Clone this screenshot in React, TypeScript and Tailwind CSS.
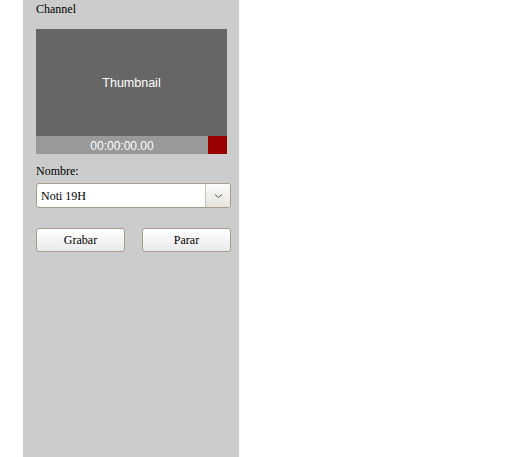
export default function App() {
  return (
    <div className="w-[516px] h-[457px] bg-white flex">
      <div
        className="ml-[23px] w-[216px] h-[457px] bg-[#cccccc] pl-[13px] flex flex-col"
        style={{ fontFamily: '"Liberation Serif", serif' }}
      >
        <div className="text-[12px] leading-[15px] text-black pt-[2px]">Channel</div>
        <div className="mt-[12px] w-[191px] flex flex-col">
          <div
            className="h-[107px] bg-[#666666] flex items-center justify-center text-white text-[12.5px] pt-[1px]"
            style={{ fontFamily: '"Liberation Sans", sans-serif' }}
          >
            Thumbnail
          </div>
          <div className="h-[18px] bg-[#999999] flex">
            <div
              className="flex-1 flex items-center justify-center text-white text-[12px] pt-[1px]"
              style={{ fontFamily: '"Liberation Sans", sans-serif' }}
            >
              00:00:00.00
            </div>
            <div className="w-[19px] bg-[#990000]" />
          </div>
        </div>
        <div className="mt-[10px] text-[12px] leading-[15px] text-black">Nombre:</div>
        <div className="mt-[4px] w-[195px] h-[25px] flex border border-[#a69d8c] rounded-[3px] bg-white overflow-hidden">
          <div className="flex-1 flex items-center pl-[4px] text-[12px] text-black">Noti 19H</div>
          <div className="w-[25px] border-l border-[#c8c2b6] bg-gradient-to-b from-[#fbfbfa] to-[#e6e4df] flex items-center justify-center">
            <svg width="9" height="6" viewBox="0 0 9 6">
              <path d="M1 1.5 L4.5 4.5 L8 1.5" fill="none" stroke="#555" strokeWidth="1" />
            </svg>
          </div>
        </div>
        <div className="mt-[20px] flex gap-[17px]">
          <button className="w-[89px] h-[24px] border border-[#a69d8c] rounded-[3px] bg-gradient-to-b from-white to-[#e9e9e9] text-[12px] text-black">
            Grabar
          </button>
          <button className="w-[89px] h-[24px] border border-[#a69d8c] rounded-[3px] bg-gradient-to-b from-white to-[#e9e9e9] text-[12px] text-black">
            Parar
          </button>
        </div>
      </div>
    </div>
  );
}
